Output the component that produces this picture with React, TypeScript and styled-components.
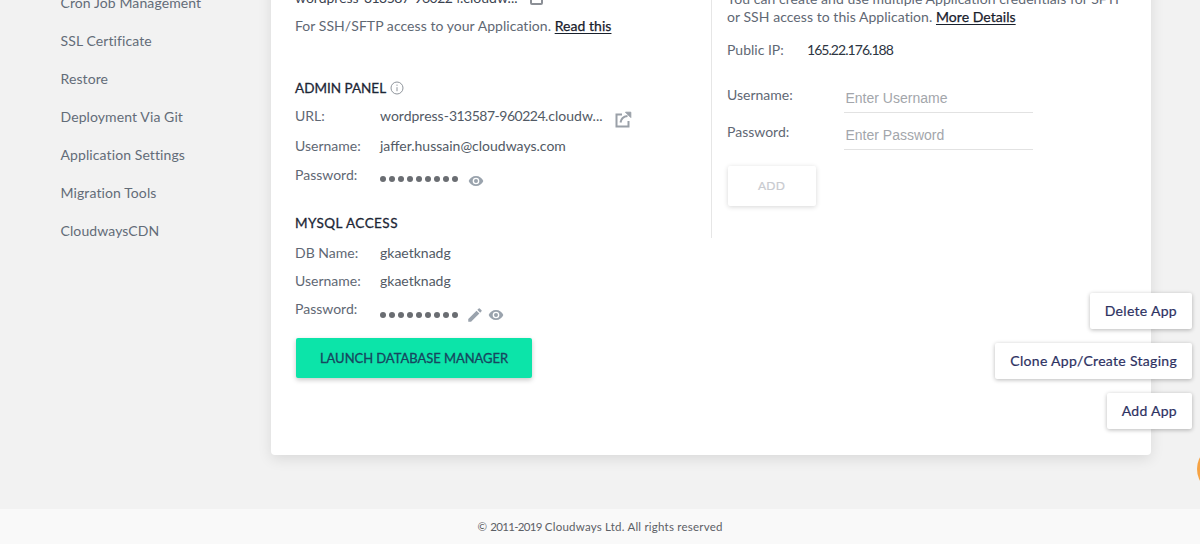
import React from "react";
import styled, { createGlobalStyle } from "styled-components";

const Global = createGlobalStyle`
  html, body { margin: 0; padding: 0; height: 544px; overflow: hidden; background: #f2f2f2; }
  body { font-family: Lato, "Liberation Sans", sans-serif; }
  * { box-sizing: border-box; }
`;

const Page = styled.div`
  position: relative;
  width: 1200px;
  height: 544px;
  overflow: hidden;
  display: flex;
  flex-direction: column;
`;

const Main = styled.div`
  flex: 1;
  min-height: 0;
  display: flex;
  align-items: flex-end;
  padding-bottom: 54px;
`;

const Sidebar = styled.nav`
  width: 271px;
  align-self: flex-start;
  margin-top: -16px;
  padding-left: 60.5px;
  display: flex;
  flex-direction: column;
`;

const NavItem = styled.a`
  height: 38px;
  line-height: 38px;
  font-size: 14px;
  letter-spacing: 0.1px;
  color: #636c78;
`;

const Card = styled.section`
  width: 880px;
  height: 500px;
  flex: none;
  background: #fff;
  border-radius: 4px;
  box-shadow: 0 4px 14px rgba(0, 0, 0, 0.1);
  display: flex;
  align-items: flex-start;
`;

const LeftCol = styled.div`
  width: 440px;
  height: 100%;
  flex: none;
  padding-left: 24px;
  display: flex;
  flex-direction: column;
`;

const RightCol = styled.div`
  flex: 1;
  height: 283px;
  border-left: 1px solid #e6e6e6;
  padding: 35px 0 0 15px;
  display: flex;
  flex-direction: column;
`;

const TopRow = styled.div`
  height: 14px;
  margin-top: 35px;
  display: flex;
  align-items: center;
  color: #3b4350;
  font-size: 14px;
`;

const CopyIcon = styled.span`
  width: 13px;
  height: 14px;
  margin-left: 12px;
  margin-top: 1px;
  border: 2px solid #8b8f96;
  border-radius: 2px;
`;

const Note = styled.p`
  margin: 13px 0 0;
  font-size: 14px;
  line-height: 18px;
  letter-spacing: 0.05px;
  color: #5f6874;
`;

const Strong = styled.a`
  color: #18202c;
  text-decoration: underline;
  text-underline-offset: 2px;
  -webkit-text-stroke: 0.25px #18202c;
`;

const Heading = styled.h3<{ $top: number; $after: number; $spacing: number }>`
  margin: ${(p) => p.$top}px 0 ${(p) => p.$after}px;
  height: 18px;
  display: flex;
  align-items: center;
  gap: 4px;
  font-size: 13.5px;
  font-weight: 400;
  letter-spacing: ${(p) => p.$spacing}px;
  color: #1d2736;
  -webkit-text-stroke: 0.3px #1d2736;
`;

const Row = styled.div<{ $height: number }>`
  height: ${(p) => p.$height}px;
  display: flex;
  align-items: center;
  font-size: 14px;
  color: #5f6874;
`;

const Label = styled.span<{ $w?: number }>`
  width: ${(p) => p.$w ?? 85}px;
  flex: none;
`;

const Value = styled.span`
  color: #525a65;
`;

const Num = styled.span`
  letter-spacing: -0.5px;
`;

const FooterNum = styled.span`
  letter-spacing: -0.7px;
`;

const Dots = styled.span<{ $mt: number }>`
  display: flex;
  gap: 3px;
  margin-top: ${(p) => p.$mt}px;
  margin-right: 10px;
`;

const Dot = styled.i`
  width: 6px;
  height: 6px;
  border-radius: 50%;
  background: #6a6d72;
`;

const IconWrap = styled.span<{ $mt?: number; $ml?: number }>`
  display: inline-flex;
  margin-top: ${(p) => p.$mt ?? 0}px;
  margin-left: ${(p) => p.$ml ?? 0}px;
`;

const LaunchButton = styled.button`
  width: 236px;
  height: 40px;
  margin: 16px 0 0 1px;
  border: 0;
  border-radius: 2px;
  background: #0ce4a9;
  box-shadow: 0 2px 5px rgba(0, 0, 0, 0.22);
  color: #17465f;
  font: inherit;
  font-size: 13px;
  letter-spacing: -0.05px;
  -webkit-text-stroke: 0.3px #17465f;
`;

const Intro = styled.p`
  margin: 0;
  font-size: 14px;
  line-height: 18px;
  letter-spacing: 0.05px;
  color: #5f6874;
  white-space: nowrap;
`;

const IpRow = styled.div`
  margin-top: 14px;
  height: 18px;
  display: flex;
  align-items: center;
  font-size: 14px;
  color: #5f6874;
`;

const IpValue = styled.span`
  color: #2d3542;
  letter-spacing: -0.95px;
`;

const FieldRow = styled.div<{ $top: number }>`
  margin-top: ${(p) => p.$top}px;
  display: flex;
  align-items: flex-start;
  font-size: 14px;
  color: #5f6874;
`;

const FieldLabel = styled.span`
  width: 117px;
  flex: none;
  line-height: 18px;
`;

const Input = styled.input`
  width: 189px;
  height: 26px;
  margin-top: 1px;
  padding: 0 2px 4px 1.5px;
  border: 0;
  border-bottom: 1px solid #e2e2e2;
  outline: none;
  background: transparent;
  font-family: "Liberation Sans", Arial, sans-serif;
  font-size: 14px;
  &::placeholder { color: #a3a6ab; opacity: 1; }
`;

const AddButton = styled.button`
  width: 88px;
  height: 40px;
  margin: 16px 0 0 1px;
  padding: 0 1px 2px 0;
  border: 0;
  border-radius: 2px;
  background: #fff;
  box-shadow: 0 1px 5px rgba(0, 0, 0, 0.16);
  color: #c9cbd0;
  font: inherit;
  font-size: 12px;
  letter-spacing: 0.2px;
  -webkit-text-stroke: 0.2px #c9cbd0;
`;

const ActionStack = styled.div`
  position: absolute;
  right: 8px;
  top: 293px;
  display: flex;
  flex-direction: column;
  align-items: flex-end;
  gap: 14px;
`;

const ActionButton = styled.button`
  height: 36px;
  padding: 0 15px 2px;
  border: 0;
  border-radius: 2px;
  background: #fff;
  box-shadow: 0 1px 4px rgba(0, 0, 0, 0.28);
  color: #2d3162;
  font: inherit;
  font-size: 14px;
  letter-spacing: 0.3px;
  -webkit-text-stroke: 0.2px #2d3162;
`;

const Fab = styled.div`
  position: absolute;
  left: 1197px;
  top: 445px;
  width: 48px;
  height: 48px;
  border-radius: 50%;
  background: #f6a243;
`;

const Footer = styled.footer`
  height: 35px;
  flex: none;
  background: #f9f9f9;
  display: flex;
  align-items: center;
  justify-content: center;
  font-size: 11.5px;
  letter-spacing: 0.22px;
  color: #5c6066;
`;

const Eye = () => (
  <svg width="16" height="16" viewBox="0 0 24 24" fill="#9aa3ad">
    <path d="M12 4.5C7 4.5 2.7 7.6 1 12c1.7 4.4 6 7.5 11 7.5s9.3-3.1 11-7.5c-1.7-4.4-6-7.5-11-7.5zM12 17a5 5 0 1 1 0-10 5 5 0 0 1 0 10zm0-8a3 3 0 1 0 0 6 3 3 0 0 0 0-6z" />
  </svg>
);

const Pencil = () => (
  <svg width="18" height="18" viewBox="0 0 24 24" fill="#9aa3ad">
    <path d="M3 17.25V21h3.75L17.81 9.94l-3.75-3.75L3 17.25zM20.71 7.04a1 1 0 0 0 0-1.41l-2.34-2.34a1 1 0 0 0-1.41 0l-1.83 1.83 3.75 3.75 1.83-1.83z" />
  </svg>
);

const External = () => (
  <svg width="17" height="17" viewBox="0 0 17 17" fill="none" stroke="#9aa0a8" strokeWidth="2">
    <path d="M7 3.5H1.5v12h12V10" />
    <path d="M5.5 11.5 C6 8 8.5 5.5 12.5 5" />
    <path d="M10.5 1.2h5.3v5.3z" fill="#9aa0a8" strokeWidth="1" />
  </svg>
);

const Info = () => (
  <svg width="14" height="14" viewBox="0 0 14 14" fill="none" stroke="#8f959c" strokeWidth="1">
    <circle cx="7" cy="7" r="6" />
    <path d="M7 6.2v4M7 3.6v1.2" />
  </svg>
);

const PasswordDots = ({ mt }: { mt: number }) => (
  <Dots $mt={mt}>
    {Array.from({ length: 9 }).map((_, i) => (
      <Dot key={i} />
    ))}
  </Dots>
);

const nav = [
  "Cron Job Management",
  "SSL Certificate",
  "Restore",
  "Deployment Via Git",
  "Application Settings",
  "Migration Tools",
  "CloudwaysCDN",
];

export default function App() {
  return (
    <Page>
      <Global />
      <Main>
        <Sidebar>
          {nav.map((n) => (
            <NavItem key={n}>{n}</NavItem>
          ))}
        </Sidebar>
        <Card>
          <LeftCol>
            <TopRow>
              <span>
                wordpress-<Num>313587-960224</Num>.cloudw...
              </span>
              <CopyIcon />
            </TopRow>
            <Note>
              For SSH/SFTP access to your Application. <Strong>Read this</Strong>
            </Note>
            <Heading $top={44} $after={3} $spacing={0}>
              <span>ADMIN PANEL</span>
              <Info />
            </Heading>
            <Row $height={30}>
              <Label>URL:</Label>
              <Value>
                wordpress-<Num>313587-960224</Num>.cloudw...
              </Value>
              <IconWrap $ml={12} $mt={8}>
                <External />
              </IconWrap>
            </Row>
            <Row $height={30}>
              <Label>Username:</Label>
              <Value>jaffer.hussain@cloudways.com</Value>
            </Row>
            <Row $height={28}>
              <Label>Password:</Label>
              <PasswordDots mt={9} />
              <IconWrap $mt={14}>
                <Eye />
              </IconWrap>
            </Row>
            <Heading $top={26} $after={6} $spacing={0.45}>
              MYSQL ACCESS
            </Heading>
            <Row $height={28}>
              <Label>DB Name:</Label>
              <Value>gkaetknadg</Value>
            </Row>
            <Row $height={28}>
              <Label>Username:</Label>
              <Value>gkaetknadg</Value>
            </Row>
            <Row $height={28}>
              <Label>Password:</Label>
              <PasswordDots mt={13} />
              <IconWrap $mt={14} $ml={-2}>
                <Pencil />
              </IconWrap>
              <IconWrap $mt={14} $ml={4}>
                <Eye />
              </IconWrap>
            </Row>
            <LaunchButton>LAUNCH DATABASE MANAGER</LaunchButton>
          </LeftCol>
          <RightCol>
            <Intro>
              You can create and use multiple Application credentials for SFTP
              <br />
              or SSH access to this Application. <Strong>More Details</Strong>
            </Intro>
            <IpRow>
              <Label $w={80}>Public IP:</Label>
              <IpValue>165.22.176.188</IpValue>
            </IpRow>
            <FieldRow $top={28}>
              <FieldLabel>Username:</FieldLabel>
              <Input placeholder="Enter Username" />
            </FieldRow>
            <FieldRow $top={10}>
              <FieldLabel>Password:</FieldLabel>
              <Input placeholder="Enter Password" />
            </FieldRow>
            <AddButton>ADD</AddButton>
          </RightCol>
        </Card>
      </Main>
      <Footer>
        <span>
          © <FooterNum>2011-2019</FooterNum> Cloudways Ltd. All rights reserved
        </span>
      </Footer>
      <ActionStack>
        <ActionButton>Delete App</ActionButton>
        <ActionButton>Clone App/Create Staging</ActionButton>
        <ActionButton>Add App</ActionButton>
      </ActionStack>
      <Fab />
    </Page>
  );
}
